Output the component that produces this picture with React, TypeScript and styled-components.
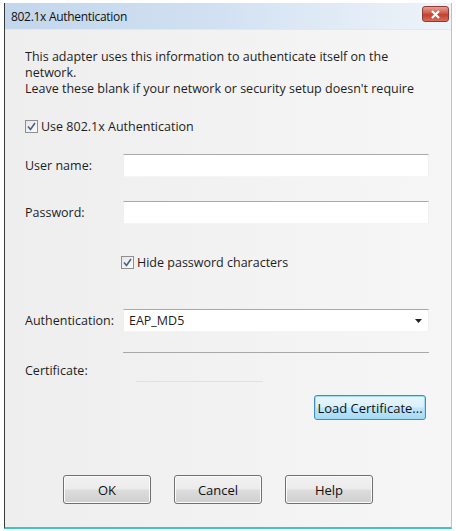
import React from 'react'
import styled, { createGlobalStyle } from 'styled-components'

const GlobalStyle = createGlobalStyle`
  html, body {
    margin: 0;
    padding: 0;
    background: #ffffff;
  }
  body {
    font-family: "Open Sans", "Noto Sans", sans-serif;
    font-size: 12.5px;
    color: #1e1e1e;
  }
`

// Window frame
const Window = styled.div`
  margin: 3px 0 0 4px;
  width: 446px;
  height: 524px;
  border-left: 1px solid #3a3a3a;
  border-right: 1px solid #b9c4cf;
  border-bottom: 2px solid #3fc4c9;
  background: linear-gradient(90deg, #eeeeee 0%, #f3f3f3 60%, #f6f6f6 100%);
  display: flex;
  flex-direction: column;
  overflow: hidden;
`

const TitleBar = styled.div`
  height: 26px;
  display: flex;
  align-items: center;
  justify-content: space-between;
  padding: 0 2px 0 6px;
  background: linear-gradient(90deg, #c2d6ec 0%, #d0e0f1 45%, #e4edf7 80%, #edf3f9 100%);
  border-bottom: 1px solid #e2e8ef;
`

const Title = styled.span`
  font-size: 12px;
  letter-spacing: -0.3px;
  color: #111;
`

const CloseButton = styled.div`
  width: 27px;
  height: 16px;
  margin-top: -4px;
  border: 1px solid #8a3d36;
  border-radius: 3px;
  background: linear-gradient(180deg, #e8a093 0%, #d0584a 45%, #c2402f 55%, #d86e55 100%);
  display: flex;
  align-items: center;
  justify-content: center;
  box-sizing: border-box;
`

const Body = styled.div`
  flex: 1;
  display: flex;
  flex-direction: column;
  padding: 19px 22px 0 20px;
`

const Intro = styled.p`
  margin: 0;
  height: 48px;
  overflow: hidden;
  line-height: 16px;
`

const CheckRow = styled.label<{ indent?: number; top: number }>`
  display: flex;
  align-items: center;
  height: 16px;
  margin-top: ${(p) => p.top}px;
  padding-left: ${(p) => p.indent || 0}px;
`

const Box = styled.span`
  width: 13px;
  height: 13px;
  box-sizing: border-box;
  border: 1px solid #8f8f8f;
  background: linear-gradient(135deg, #e6e6e6 0%, #fbfbfb 100%);
  display: inline-flex;
  align-items: center;
  justify-content: center;
  margin-right: 3px;
`

const FieldRow = styled.div<{ top: number }>`
  display: flex;
  align-items: center;
  margin-top: ${(p) => p.top}px;
`

const Label = styled.span`
  width: 98px;
  flex-shrink: 0;
`

const TextBox = styled.div`
  flex: 1;
  height: 23px;
  box-sizing: border-box;
  background: #ffffff;
  border-top: 1px solid #a9a9a9;
  border-left: 1px solid #eef0f2;
  border-right: 1px solid #eef0f2;
  border-bottom: 1px solid #f4f5f6;
`

const Combo = styled(TextBox)`
  display: flex;
  align-items: center;
  justify-content: space-between;
  padding: 0 6px 0 5px;
`

const Separator = styled.div`
  margin: 20px 0 0 98px;
  height: 1px;
  background: #a8a8a8;
`

const CertRow = styled.div`
  display: flex;
  height: 20px;
  margin-top: 9px;
`

const CertLine = styled.span`
  align-self: flex-end;
  margin-left: 13px;
  width: 127px;
  height: 1px;
  background: #e1e1e1;
`

const LoadRow = styled.div`
  display: flex;
  justify-content: flex-end;
  margin-top: 13px;
  padding-right: 3px;
`

const Button = styled.button<{ primary?: boolean }>`
  height: ${(p) => (p.primary ? 25 : 29)}px;
  width: ${(p) => (p.primary ? 112 : 88)}px;
  padding: 0;
  font-family: "Open Sans", "Noto Sans", sans-serif;
  font-size: 13px;
  color: #111;
  border-radius: 3px;
  border: 1px solid ${(p) => (p.primary ? '#3c8fc4' : '#707070')};
  box-shadow: inset 0 0 0 1px ${(p) => (p.primary ? '#9fdbf5' : '#fbfbfb')};
  background: ${(p) =>
    p.primary
      ? 'linear-gradient(180deg, #eaf6fd 0%, #d9f0fc 48%, #bee6fd 52%, #a7d9f5 100%)'
      : 'linear-gradient(180deg, #f2f2f2 0%, #ebebeb 48%, #dddddd 52%, #cfcfcf 100%)'};
`

const ButtonBar = styled.div`
  display: flex;
  gap: 23px;
  margin-top: 55px;
  padding-left: 38px;
`

const Check = () => (
  <Box>
    <svg width="9" height="9" viewBox="0 0 9 9">
      <path d="M1 4.5 L3.5 7.5 L8 1" fill="none" stroke="#4a5f86" strokeWidth="1.6" />
    </svg>
  </Box>
)

export default function App() {
  return (
    <>
      <GlobalStyle />
      <Window>
        <TitleBar>
          <Title>802.1x Authentication</Title>
          <CloseButton>
            <svg width="11" height="9" viewBox="0 0 11 9">
              <path d="M2 1 L9 8 M9 1 L2 8" stroke="#ffffff" strokeWidth="2.2" />
            </svg>
          </CloseButton>
        </TitleBar>
        <Body>
          <Intro>
            This adapter uses this information to authenticate itself on the
            <br />
            network.
            <br />
            Leave these blank if your network or security setup doesn't require
          </Intro>
          <CheckRow top={21}>
            <Check />
            Use 802.1x Authentication
          </CheckRow>
          <FieldRow top={20}>
            <Label>User name:</Label>
            <TextBox />
          </FieldRow>
          <FieldRow top={24}>
            <Label>Password:</Label>
            <TextBox />
          </FieldRow>
          <CheckRow top={30} indent={96}>
            <Check />
            Hide password characters
          </CheckRow>
          <FieldRow top={39}>
            <Label>Authentication:</Label>
            <Combo>
              EAP_MD5
              <svg width="7" height="4" viewBox="0 0 7 4">
                <path d="M0 0 H7 L3.5 4 Z" fill="#222" />
              </svg>
            </Combo>
          </FieldRow>
          <Separator />
          <CertRow>
            <Label>Certificate:</Label>
            <CertLine />
          </CertRow>
          <LoadRow>
            <Button primary>Load Certificate...</Button>
          </LoadRow>
          <ButtonBar>
            <Button>OK</Button>
            <Button>Cancel</Button>
            <Button>Help</Button>
          </ButtonBar>
        </Body>
      </Window>
    </>
  )
}
